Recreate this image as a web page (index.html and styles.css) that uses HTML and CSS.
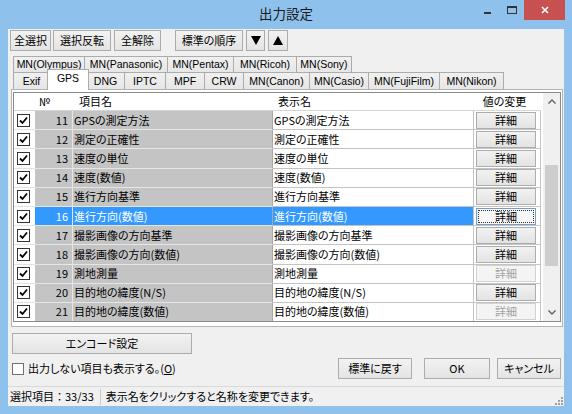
FILE: index.html
```html
<!DOCTYPE html>
<html lang="ja">
<head>
<meta charset="utf-8">
<title>出力設定</title>
<link rel="stylesheet" href="styles.css">
</head>
<body>
<div class="window">
  <div class="titlebar">
    <div class="title">出力設定</div>
    <div class="controls">
      <span class="ctl ctl-min"><span class="min-line"></span></span>
      <span class="ctl ctl-max"><span class="max-box"></span></span>
      <span class="ctl ctl-close"><svg width="8" height="8" viewBox="0 0 8 8"><path d="M1 1L7 7M7 1L1 7" stroke="#fff" stroke-width="1.6"/></svg></span>
    </div>
  </div>
  <div class="client">
    <div class="toolbar">
      <button class="btn tb-all">全選択</button>
      <button class="btn tb-inv">選択反転</button>
      <button class="btn tb-clr">全解除</button>
      <button class="btn tb-std">標準の順序</button>
      <button class="btn tb-down"><svg width="10" height="9" viewBox="0 0 10 9"><path d="M0 0H10L5 9Z" fill="#000"/></svg></button>
      <button class="btn tb-up"><svg width="10" height="9" viewBox="0 0 10 9"><path d="M0 9H10L5 0Z" fill="#000"/></svg></button>
    </div>
    <div class="tabs">
      <div class="tabrow back">
        <span class="tab w72">MN(Olympus)</span>
        <span class="tab w84">MN(Panasonic)</span>
        <span class="tab w67">MN(Pentax)</span>
        <span class="tab w64">MN(Ricoh)</span>
        <span class="tab w56">MN(Sony)</span>
      </div>
      <div class="tabrow front">
        <span class="tab w37">Exif</span>
        <span class="tab sel">GPS</span>
        <span class="tab w39">DNG</span>
        <span class="tab w42">IPTC</span>
        <span class="tab w40">MPF</span>
        <span class="tab w40">CRW</span>
        <span class="tab w67">MN(Canon)</span>
        <span class="tab w60">MN(Casio)</span>
        <span class="tab w72">MN(FujiFilm)</span>
        <span class="tab w65">MN(Nikon)</span>
      </div>
    </div>
    <div class="panel">
      <div class="grid">
        <div class="gbody">
          <div class="row head">
            <div class="c c-chk"></div>
            <div class="c c-no">№</div>
            <div class="c c-name">項目名</div>
            <div class="c c-disp">表示名</div>
            <div class="c c-val">値の変更</div>
          </div>
          <div class="row">
            <div class="c c-chk"><span class="cb on"><svg width="11" height="11" viewBox="0 0 11 11"><path d="M2 5.5L4.5 8L9 2.5" fill="none" stroke="#000" stroke-width="1.8"/></svg></span></div>
            <div class="c c-no">11</div>
            <div class="c c-name">GPSの測定方法</div>
            <div class="c c-disp">GPSの測定方法</div>
            <div class="c c-val"><span class="dbtn">詳細</span></div>
          </div>
          <div class="row">
            <div class="c c-chk"><span class="cb on"><svg width="11" height="11" viewBox="0 0 11 11"><path d="M2 5.5L4.5 8L9 2.5" fill="none" stroke="#000" stroke-width="1.8"/></svg></span></div>
            <div class="c c-no">12</div>
            <div class="c c-name">測定の正確性</div>
            <div class="c c-disp">測定の正確性</div>
            <div class="c c-val"><span class="dbtn">詳細</span></div>
          </div>
          <div class="row">
            <div class="c c-chk"><span class="cb on"><svg width="11" height="11" viewBox="0 0 11 11"><path d="M2 5.5L4.5 8L9 2.5" fill="none" stroke="#000" stroke-width="1.8"/></svg></span></div>
            <div class="c c-no">13</div>
            <div class="c c-name">速度の単位</div>
            <div class="c c-disp">速度の単位</div>
            <div class="c c-val"><span class="dbtn">詳細</span></div>
          </div>
          <div class="row">
            <div class="c c-chk"><span class="cb on"><svg width="11" height="11" viewBox="0 0 11 11"><path d="M2 5.5L4.5 8L9 2.5" fill="none" stroke="#000" stroke-width="1.8"/></svg></span></div>
            <div class="c c-no">14</div>
            <div class="c c-name">速度(数値)</div>
            <div class="c c-disp">速度(数値)</div>
            <div class="c c-val"><span class="dbtn">詳細</span></div>
          </div>
          <div class="row">
            <div class="c c-chk"><span class="cb on"><svg width="11" height="11" viewBox="0 0 11 11"><path d="M2 5.5L4.5 8L9 2.5" fill="none" stroke="#000" stroke-width="1.8"/></svg></span></div>
            <div class="c c-no">15</div>
            <div class="c c-name">進行方向基準</div>
            <div class="c c-disp">進行方向基準</div>
            <div class="c c-val"><span class="dbtn">詳細</span></div>
          </div>
          <div class="row sel">
            <div class="c c-chk"><span class="cb on"><svg width="11" height="11" viewBox="0 0 11 11"><path d="M2 5.5L4.5 8L9 2.5" fill="none" stroke="#000" stroke-width="1.8"/></svg></span></div>
            <div class="c c-no">16</div>
            <div class="c c-name">進行方向(数値)</div>
            <div class="c c-disp">進行方向(数値)</div>
            <div class="c c-val"><span class="dbtn focus"><span class="focus-in">詳細</span></span></div>
          </div>
          <div class="row">
            <div class="c c-chk"><span class="cb on"><svg width="11" height="11" viewBox="0 0 11 11"><path d="M2 5.5L4.5 8L9 2.5" fill="none" stroke="#000" stroke-width="1.8"/></svg></span></div>
            <div class="c c-no">17</div>
            <div class="c c-name">撮影画像の方向基準</div>
            <div class="c c-disp">撮影画像の方向基準</div>
            <div class="c c-val"><span class="dbtn">詳細</span></div>
          </div>
          <div class="row">
            <div class="c c-chk"><span class="cb on"><svg width="11" height="11" viewBox="0 0 11 11"><path d="M2 5.5L4.5 8L9 2.5" fill="none" stroke="#000" stroke-width="1.8"/></svg></span></div>
            <div class="c c-no">18</div>
            <div class="c c-name">撮影画像の方向(数値)</div>
            <div class="c c-disp">撮影画像の方向(数値)</div>
            <div class="c c-val"><span class="dbtn">詳細</span></div>
          </div>
          <div class="row">
            <div class="c c-chk"><span class="cb on"><svg width="11" height="11" viewBox="0 0 11 11"><path d="M2 5.5L4.5 8L9 2.5" fill="none" stroke="#000" stroke-width="1.8"/></svg></span></div>
            <div class="c c-no">19</div>
            <div class="c c-name">測地測量</div>
            <div class="c c-disp">測地測量</div>
            <div class="c c-val"><span class="dbtn off">詳細</span></div>
          </div>
          <div class="row">
            <div class="c c-chk"><span class="cb on"><svg width="11" height="11" viewBox="0 0 11 11"><path d="M2 5.5L4.5 8L9 2.5" fill="none" stroke="#000" stroke-width="1.8"/></svg></span></div>
            <div class="c c-no">20</div>
            <div class="c c-name">目的地の緯度(N/S)</div>
            <div class="c c-disp">目的地の緯度(N/S)</div>
            <div class="c c-val"><span class="dbtn">詳細</span></div>
          </div>
          <div class="row">
            <div class="c c-chk"><span class="cb on"><svg width="11" height="11" viewBox="0 0 11 11"><path d="M2 5.5L4.5 8L9 2.5" fill="none" stroke="#000" stroke-width="1.8"/></svg></span></div>
            <div class="c c-no">21</div>
            <div class="c c-name">目的地の緯度(数値)</div>
            <div class="c c-disp">目的地の緯度(数値)</div>
            <div class="c c-val"><span class="dbtn off">詳細</span></div>
          </div>
        </div>
        <div class="vscroll">
          <div class="arrow"><svg width="8" height="5" viewBox="0 0 8 5"><path d="M0.5 4.5L4 1L7.5 4.5" fill="none" stroke="#606060" stroke-width="1.4"/></svg></div>
          <div class="track-top"></div>
          <div class="thumb"></div>
          <div class="track-rest"></div>
          <div class="arrow"><svg width="8" height="5" viewBox="0 0 8 5"><path d="M0.5 0.5L4 4L7.5 0.5" fill="none" stroke="#606060" stroke-width="1.4"/></svg></div>
        </div>
      </div>
    </div>
    <div class="encode-row">
      <button class="btn encode">エンコード設定</button>
    </div>
    <div class="footer">
      <label class="showall"><span class="cb plain"></span><span class="showall-text">出力しない項目も表示する。(<u>O</u>)</span></label>
      <div class="actions">
        <button class="btn act-std">標準に戻す</button>
        <button class="btn act-ok">OK</button>
        <button class="btn act-cancel">キャンセル</button>
      </div>
    </div>
    <div class="statusbar">
      <span class="st-count">選択項目：33/33</span>
      <span class="st-sep"></span>
      <span class="st-msg">表示名をクリックすると名称を変更できます。</span>
      <span class="grip"><svg width="9" height="9" viewBox="0 0 9 9"><g fill="#a0a0a0"><rect x="7" y="1" width="2" height="2"/><rect x="4" y="4" width="2" height="2"/><rect x="7" y="4" width="2" height="2"/><rect x="1" y="7" width="2" height="2"/><rect x="4" y="7" width="2" height="2"/><rect x="7" y="7" width="2" height="2"/></g></svg></span>
    </div>
  </div>
</div>
</body>
</html>
```

FILE: styles.css
```css
* { box-sizing: border-box; }
html, body { margin: 0; padding: 0; }
body {
  width: 572px; height: 414px; overflow: hidden;
  background: #8ec1ec;
  font-family: "Noto Sans CJK JP", "Noto Sans", sans-serif;
  font-size: 11px; color: #000;
  font-feature-settings: "palt";
}
.window { width: 572px; height: 414px; display: flex; flex-direction: column; background: #8ec1ec; }

/* title bar */
.titlebar { height: 29px; flex: none; display: grid; grid-template-columns: 1fr auto 1fr; }
.title { grid-column: 2; font-size: 13.5px; line-height: 26px; color: #1a1a1a; font-feature-settings: normal; }
.controls { grid-column: 3; justify-self: end; display: flex; align-items: flex-start; padding-right: 7px; }
.ctl { height: 20px; display: flex; align-items: center; justify-content: center; }
.ctl-min { width: 23px; }
.min-line { width: 7px; height: 2px; background: #333; margin-top: 5px; }
.ctl-max { width: 25px; }
.max-box { width: 10px; height: 8px; border: 1px solid #333; border-top-width: 2px; margin-top: -1px; }
.ctl-close { width: 41px; background: #c75050; }

/* client */
.client {
  margin: 0 8px; height: 377px; flex: none;
  background: #f0f0f0;
  display: flex; flex-direction: column;
}
.btn {
  font: inherit; font-size: 11px; color: #000;
  font-feature-settings: "palt";
  height: 21px; padding: 0; margin: 0;
  border: 1px solid #acacac; border-radius: 0;
  background: linear-gradient(#f2f2f2, #e4e4e4);
  display: flex; align-items: center; justify-content: center;
  line-height: 1;
}
.toolbar { margin-top: 1px; padding-left: 2px; height: 21px; display: flex; flex: none; }
.tb-all { width: 41px; }
.tb-inv { width: 58px; margin-left: 2px; }
.tb-clr { width: 47px; margin-left: 3px; }
.tb-std { width: 68px; margin-left: 14px; }
.tb-down { width: 19px; margin-left: 3px; }
.tb-up { width: 20px; margin-left: 3px; }

/* tabs */
.tabs { margin-top: 5px; margin-left: 5px; height: 33px; flex: none; display: flex; flex-direction: column; }
.tabrow { display: flex; align-items: flex-end; }
.tabrow.back { height: 16px; }
.tabrow.front { height: 17px; }
.tab {
  height: 100%; margin-right: -1px;
  border: 1px solid #acacac; border-bottom: none;
  background: linear-gradient(#f0f0f0, #e6e6e6);
  display: flex; align-items: center; justify-content: center;
  font-family: "Liberation Sans", "Noto Sans CJK JP", sans-serif;
  font-size: 10.5px; line-height: 1; white-space: nowrap;
}
.tabrow.back .tab { height: 17px; align-self: flex-start; padding-bottom: 2px; }
.tab.sel {
  position: relative; z-index: 2;
  width: 42px; height: 21px;
  margin-left: -2px; margin-right: -3px; margin-bottom: -1px;
  background: #fff; padding-bottom: 3px;
}
.w37 { width: 37px; } .w39 { width: 39px; } .w40 { width: 40px; } .w42 { width: 42px; }
.w56 { width: 56px; } .w60 { width: 60px; } .w64 { width: 64px; } .w65 { width: 65px; }
.w67 { width: 67px; } .w72 { width: 72px; } .w84 { width: 84px; }

/* panel + grid */
.panel {
  margin-left: 3px; width: 552px; height: 238px; flex: none;
  border: 1px solid #b4b4b4; background: #fff;
  padding: 2px 1px 2px 1px;
}
.grid {
  width: 548px; height: 230px;
  border: 1px solid #8a8a8a; background: #fff;
  display: flex; overflow: hidden;
}
.gbody { width: 527px; margin-right: 2px; overflow: hidden; }
.row { display: grid; grid-template-columns: 21px 38px 200px 201px 67px; height: 19.2px; }
.row.head { height: 18px; border-bottom: 1px solid #d5d5d5; }
.c { display: flex; align-items: center; white-space: nowrap; overflow: hidden; line-height: 1; }
.head .c { background: #fff; }
.head .c-no { padding-left: 4px; }
.head .c-name { padding-left: 6px; }
.head .c-disp { padding-left: 5px; }
.head .c-val { justify-content: center; padding-right: 6px; }

.row:not(.head) .c-chk { background: #fff; border-bottom: 1px solid #e2e2e2; padding-left: 3px; }
.row:not(.head) .c-no { background: #c4c4c4; border-bottom: 1px solid #e6e6e6; border-right: 1px solid #e6e6e6; justify-content: flex-end; padding-right: 4px; }
.row:not(.head) .c-name { background: #c4c4c4; border-bottom: 1px solid #e6e6e6; border-right: 1px solid #a8a8a8; padding-left: 1px; }
.row:not(.head) .c-disp { background: #fff; border-bottom: 1px solid #c4c4c4; border-right: 1px solid #c4c4c4; padding-left: 1px; }
.row:not(.head) .c-val { background: #fff; border-bottom: 1px solid #c4c4c4; border-right: 1px solid #c4c4c4; padding-left: 2px; }
.row.sel .c-no, .row.sel .c-name, .row.sel .c-disp { background: #3399ff; color: #fff; }

.cb { width: 13px; height: 13px; border: 1px solid #333; background: #fff; display: flex; align-items: center; justify-content: center; flex: none; }
.dbtn {
  width: 60px; height: 17px;
  border: 1px solid #adadad;
  background: linear-gradient(#f2f2f2, #e3e3e3);
  display: flex; align-items: center; justify-content: center;
  font-size: 11px; line-height: 1;
}
.dbtn.off { color: #a3a3a3; background: #f4f4f4; border-color: #d2d2d2; }
.dbtn.focus { border-color: #7a9cc4; background: #f7f7f7; padding: 1px; }
.focus-in { width: 100%; height: 100%; border: 1px dotted #333; display: flex; align-items: center; justify-content: center; }

.vscroll { width: 17px; display: flex; flex-direction: column; background: #f0f0f0; }
.arrow { height: 17px; display: flex; align-items: center; justify-content: center; flex: none; }
.track-top { height: 55px; flex: none; }
.thumb { height: 101px; flex: none; margin: 0 2px; background: #cdcdcd; }
.track-rest { flex: 1; }

/* bottom */
.encode-row { margin-top: 6px; padding-left: 4px; flex: none; display: flex; }
.encode { width: 180px; }
.footer { margin-top: 4px; height: 21px; flex: none; display: flex; align-items: center; padding-right: 3px; }
.showall { display: flex; align-items: center; margin-left: 4px; }
.cb.plain { width: 12px; height: 12px; border-color: #707070; }
.showall-text { margin-left: 4px; line-height: 1; }
.actions { margin-left: auto; display: flex; }
.act-std { width: 74px; }
.act-ok { width: 66px; margin-left: 12px; }
.act-cancel { width: 64px; margin-left: 7px; }

.statusbar {
  margin-top: 7px; flex: 1;
  border-top: 1px solid #d9d9d9;
  display: flex; align-items: center;
  padding-left: 2px;
}
.st-count { line-height: 1; font-feature-settings: normal; }
.st-sep { width: 1px; height: 16px; background: #c8c8c8; margin: 0 5px 0 6px; }
.st-msg { line-height: 1; }
.grip { margin-left: auto; align-self: flex-end; margin-right: 1px; margin-bottom: 1px; display: flex; }
```
